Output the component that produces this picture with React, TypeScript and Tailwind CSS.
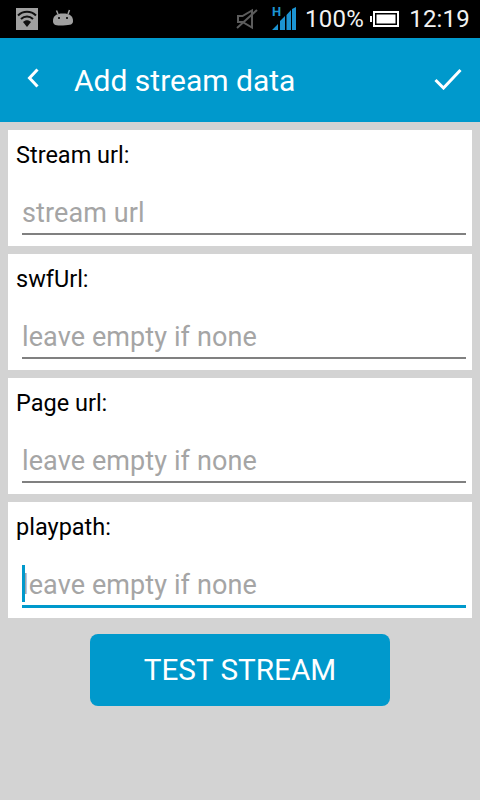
import type { ReactNode } from "react";

const fields = [
  { label: "Stream url:", hint: "stream url" },
  { label: "swfUrl:", hint: "leave empty if none" },
  { label: "Page url:", hint: "leave empty if none" },
  { label: "playpath:", hint: "leave empty if none", focused: true },
];

function StatusBar({ children }: { children: ReactNode }) {
  return <div className="flex h-[38px] items-center bg-black pl-4 pr-[10px] text-[#f2f2f2]">{children}</div>;
}

function Field({ label, hint, focused }: { label: string; hint: string; focused?: boolean }) {
  return (
    <div className="h-[116px] bg-white pl-[8px] pr-[6px] pt-[11px]">
      <p className="h-[28px] text-[23.5px] leading-[28px] text-black">{label}</p>
      <div className={`relative ml-[6px] mt-[20px] pt-[8px] ${focused ? "h-[47px] border-b-[3px] border-[#0099cc]" : "h-[46px] border-b-2 border-[#808080]"}`}>
        {focused ? <span className="absolute left-0 top-[4px] h-[37px] w-[3px] bg-[#0099cc]" /> : null}
        <span className="block text-[27px] leading-[32px] tracking-[0.1px] text-[#a5a5a5]">{hint}</span>
      </div>
    </div>
  );
}

export default function App() {
  return (
    <div className="flex h-[800px] w-[480px] flex-col overflow-hidden bg-[#d3d3d3] font-['Roboto',sans-serif]">
      <StatusBar>
        <svg width="22" height="22" viewBox="0 0 22 22" className="mt-[-1px]">
          <rect width="22" height="22" fill="#a0a0a0" />
          <path d="M2 7.500C7 2.500 15 2.500 20 7.500" fill="none" stroke="#111" strokeWidth="2" />
          <path d="M5 11C8.500 7.500 13.500 7.500 17 11" fill="none" stroke="#111" strokeWidth="2" />
          <path d="M7 14C9.500 11.500 12.500 11.500 15 14L11 19Z" fill="#111" />
        </svg>
        <svg width="22" height="20" viewBox="0 0 22 20" className="ml-[14px] mt-[-1px]">
          <path d="M1 12C1 7 4 4.500 11 4.500S21 7 21 12C21 15.500 19 16 11 16.500C3 17 1 15.500 1 12Z" fill="#a0a0a0" />
          <path d="M6 5L4.500 1.500M16 5L17.500 1" stroke="#a0a0a0" strokeWidth="1.500" />
          <rect x="6" y="8" width="2" height="2" fill="#222" />
          <rect x="14" y="8" width="2" height="2" fill="#222" />
        </svg>
        <svg width="24" height="22" viewBox="0 0 24 22" className="ml-auto">
          <path d="M2 8H6.500L16 2.500V19.500L6.500 14H2Z" fill="none" stroke="#5c5c5c" strokeWidth="2" />
          <path d="M1 20L21 2" stroke="#5c5c5c" strokeWidth="2" />
        </svg>
        <div className="relative ml-[12px] h-[24px] w-[25px]">
          <span className="absolute left-0 top-[-2px] text-[13px] font-bold leading-[13px] text-[#1c94d2]">H</span>
          <svg width="25" height="24" viewBox="0 0 25 24" className="absolute inset-0">
            <path d="M0 23L6 17V23ZM8 23V14L13 9V23ZM14.500 23V8L19 3V23ZM20 23V2L24 0V23Z" fill="#1c94d2" />
          </svg>
        </div>
        <span className="ml-[8px] text-[24px] leading-none tracking-[0.3px]">100%</span>
        <svg width="29" height="16" viewBox="0 0 29 16" className="ml-[6px]">
          <rect x="0" y="5" width="2" height="6" fill="#fff" />
          <rect x="4" y="1" width="24" height="14" fill="none" stroke="#fff" strokeWidth="2" />
          <rect x="6.500" y="3.500" width="19" height="9" fill="#fff" />
        </svg>
        <span className="ml-[10px] text-[24px] leading-none tracking-[0.2px]">12:19</span>
      </StatusBar>

      <header className="flex h-[84px] items-center bg-[#0099cc] pl-[27px] pr-[18px] text-white">
        <svg width="12" height="20" viewBox="0 0 12 20" className="mt-[-4px]">
          <path d="M10.500 1.500L2.500 10L10.500 18.500" fill="none" stroke="#fff" strokeWidth="3" />
        </svg>
        <h1 className="ml-[35px] pt-[2px] text-[30px] font-normal leading-none">Add stream data</h1>
        <svg width="28" height="22" viewBox="0 0 28 22" className="ml-auto mt-[-2px]">
          <path d="M1.500 12L9.500 20L26.500 2" fill="none" stroke="#fff" strokeWidth="3" />
        </svg>
      </header>

      <main className="flex flex-col gap-[8px] px-[8px] pt-[8px]">
        {fields.map((field) => (
          <Field key={field.label} {...field} />
        ))}
      </main>

      <button className="mx-auto mt-[16px] h-[72px] w-[300px] rounded-[8px] bg-[#0099cc] text-[29.7px] text-white">TEST STREAM</button>
    </div>
  );
}
